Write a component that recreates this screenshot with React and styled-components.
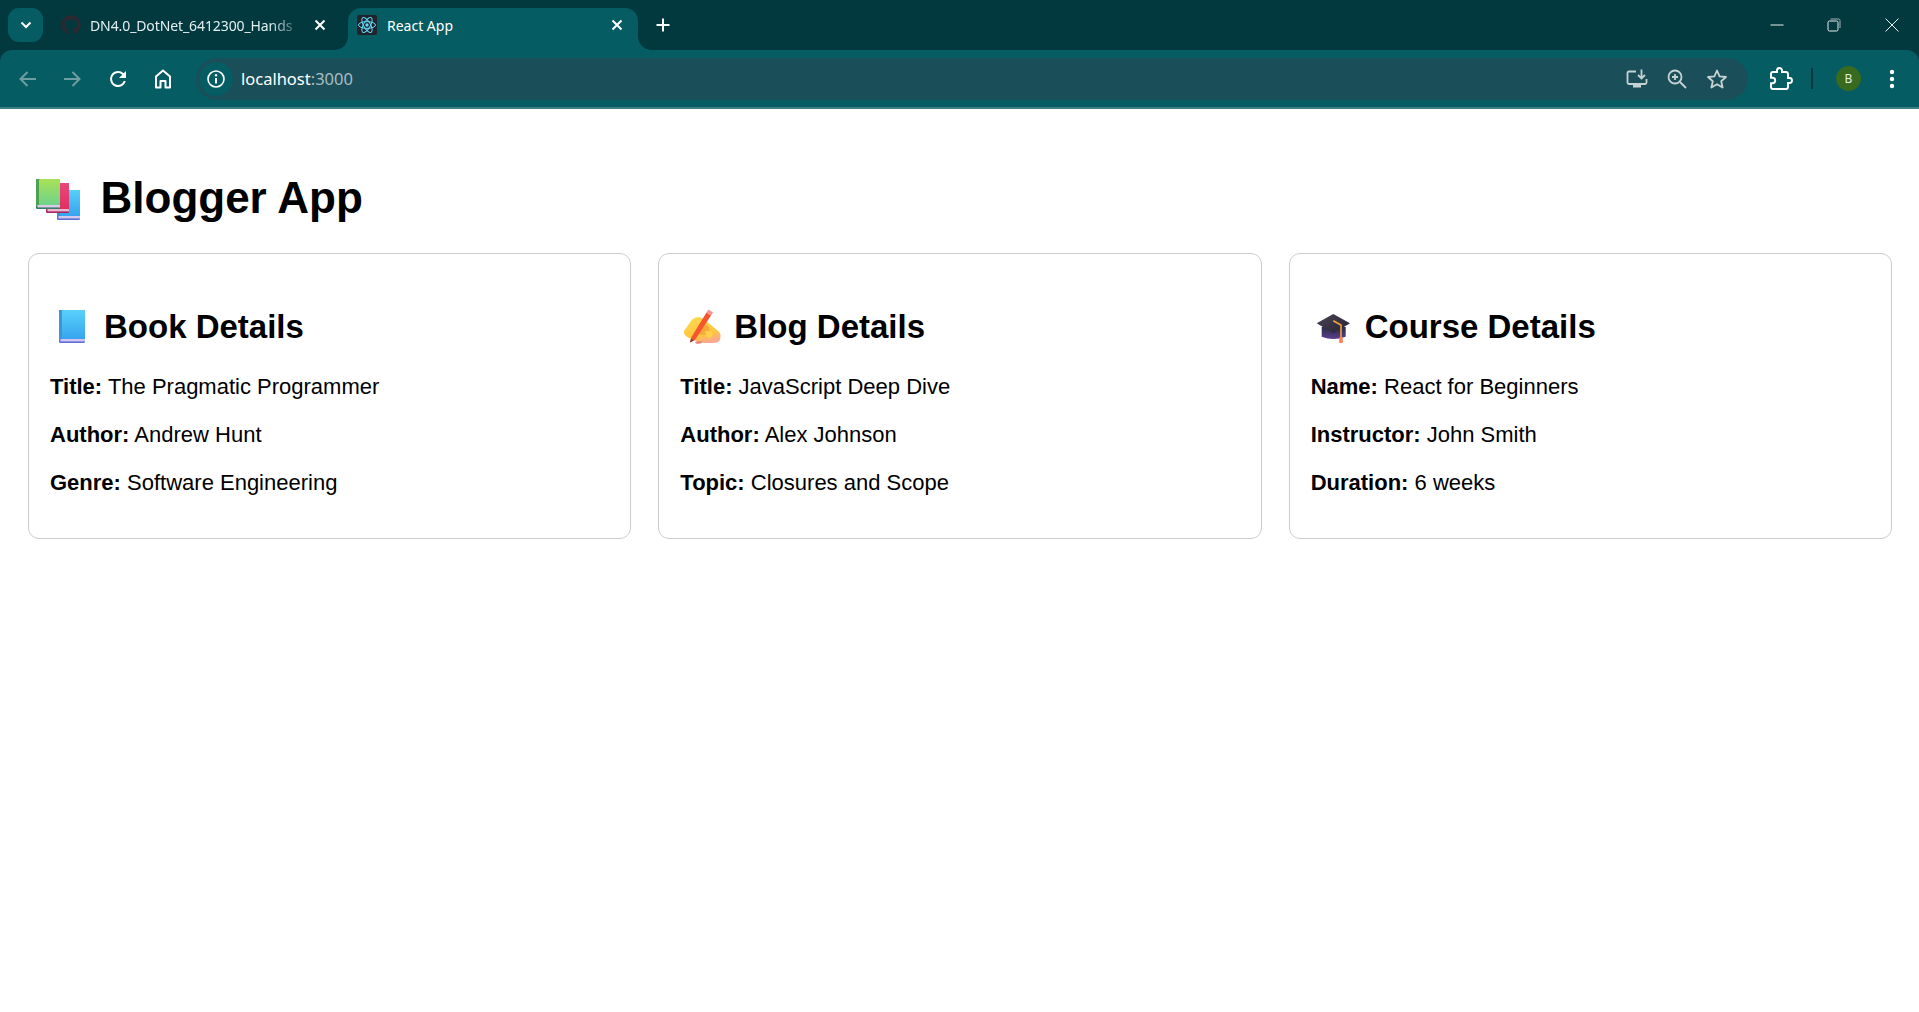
import React from 'react'
import styled, { createGlobalStyle } from 'styled-components'
import { FaGithub } from 'react-icons/fa'

const GlobalStyle = createGlobalStyle`
    html, body {
        margin: 0;
        padding: 0;
        background: #fff;
    }
    body {
        font-family: "Liberation Sans", Arial, sans-serif;
        color: #000;
    }
`;

const Browser = styled.header`
    background: #02393f;
    font-family: "Noto Sans", "Open Sans", sans-serif;
`;

const TabStrip = styled.div`
    height: 50px;
    display: flex;
    align-items: flex-end;
    padding-left: 8px;
    box-sizing: border-box;
`;

const TabMenu = styled.button`
    width: 35px;
    height: 34px;
    margin-bottom: 8px;
    margin-right: 10px;
    border: none;
    padding: 0;
    border-radius: 11px;
    background: #055c63;
    display: flex;
    align-items: center;
    justify-content: center;
`;

const Tab = styled.div`
    position: relative;
    width: ${props => props.$width}px;
    height: 42px;
    box-sizing: border-box;
    display: flex;
    align-items: center;
    gap: ${props => props.$active ? 10 : 9}px;
    padding: ${props => props.$active ? '0 13px 8px 9px' : '0 20px 8px 8px'};
    color: #fff;
    border-radius: 13px 13px 0 0;
    background: ${props => props.$active ? '#055c63' : 'transparent'};

    ${props => props.$active && `
        &::before, &::after {
            content: '';
            position: absolute;
            bottom: 0;
            width: 13px;
            height: 13px;
        }
        &::before {
            left: -13px;
            background: radial-gradient(circle at 0 0, transparent 12.5px, #055c63 13px);
        }
        &::after {
            right: -13px;
            background: radial-gradient(circle at 100% 0, transparent 12.5px, #055c63 13px);
        }
    `}
`;

const TabTitle = styled.span`
    flex: 1;
    min-width: 0;
    font-size: 14px;
    white-space: nowrap;
    color: ${props => props.$active ? '#fff' : '#e3eeef'};
    ${props => props.$fade && `
        letter-spacing: -0.1px;
        mask-image: linear-gradient(to right, #000 84%, rgba(0, 0, 0, 0.25) 97%);
    `}
`;

const NewTab = styled.div`
    width: 20px;
    height: 34px;
    margin: 0 0 8px 15px;
    display: flex;
    align-items: center;
    justify-content: center;
`;

const WindowControls = styled.div`
    margin-left: auto;
    height: 50px;
    display: flex;
    align-items: center;
`;

const WindowButton = styled.div`
    width: 57px;
    height: 50px;
    display: flex;
    align-items: center;
    justify-content: center;
    padding-left: ${props => props.$pad || 0}px;
    box-sizing: border-box;
`;

const Toolbar = styled.div`
    position: relative;
    height: 59px;
    box-sizing: border-box;
    display: flex;
    align-items: center;
    padding: 0 22px 0 0;
    background: #055c63;
    border-radius: 12px 12px 0 0;
    border-bottom: 2px solid #3d7f85;
`;

const NavButton = styled.div`
    width: 45px;
    flex: none;
    height: 40px;
    display: flex;
    align-items: center;
    justify-content: center;
    margin-left: ${props => props.$first ? 5 : 0}px;
`;

const Omnibox = styled.div`
    flex: 1;
    height: 42px;
    margin-left: 11px;
    display: flex;
    align-items: center;
    background: #1a4f5a;
    border-radius: 21px;
    padding: 0 19px 0 3px;
`;

const InfoChip = styled.div`
    width: 34px;
    height: 34px;
    flex: none;
    border-radius: 50%;
    background: #055c63;
    display: flex;
    align-items: center;
    justify-content: center;
`;

const Address = styled.div`
    margin-left: 8px;
    font-size: 16.5px;
    color: #fff;
    span {
        color: #a9bcc0;
    }
`;

const OmniIcons = styled.div`
    margin-left: auto;
    display: flex;
    align-items: center;
    gap: 16px;
`;

const ProfileGroup = styled.div`
    display: flex;
    align-items: center;
    margin-left: 21px;
`;

const Divider = styled.div`
    width: 2px;
    height: 21px;
    margin: 0 23px 0 18px;
    background: #02393f;
`;

const Avatar = styled.div`
    width: 25px;
    height: 25px;
    border-radius: 50%;
    background: #386a20;
    color: #e4efd9;
    font-size: 12px;
    display: flex;
    align-items: center;
    justify-content: center;
`;

const Kebab = styled.div`
    margin-left: 26px;
    display: flex;
    align-items: center;
`;

const Page = styled.main`
    padding: 64px 27px 0 28px;
`;

const Title = styled.h1`
    margin: 0 0 30px;
    height: 50px;
    display: flex;
    align-items: center;
    font-size: 44px;
    font-weight: 700;
    line-height: 50px;
`;

const CardGrid = styled.div`
    display: grid;
    grid-template-columns: repeat(3, 1fr);
    gap: 27px;
`;

const Card = styled.section`
    height: 286px;
    box-sizing: border-box;
    padding: 54px 21px 0;
    border: 1px solid #ccc;
    border-radius: 11px;
`;

const CardTitle = styled.h2`
    margin: 0 0 28px;
    height: 38px;
    display: flex;
    align-items: center;
    font-size: 33px;
    font-weight: 700;
    line-height: 38px;

    svg {
        margin-right: 8px;
        flex: none;
    }
`;

const Field = styled.p`
    margin: 0 0 23px;
    font-size: 22px;
    line-height: 25px;

    strong {
        font-weight: 700;
    }
`;

const Icon = ({ size = 24, children, ...rest }) => (
    <svg width={size} height={size} viewBox="0 0 24 24" fill="none" {...rest}>{children}</svg>
);

const BookShape = ({ id, x, y, w, h, top, bottom, spine, pages, edge }) => (
    <g>
        <defs>
            <linearGradient id={id} x1="0" y1="0" x2="0" y2="1">
                <stop offset="0" stopColor={top} />
                <stop offset="1" stopColor={bottom} />
            </linearGradient>
        </defs>
        <rect x={x} y={y} width={w} height={h} rx="1.2" fill={edge} />
        <rect x={x + 3} y={y} width={w - 3} height={h - 4} rx="1" fill={`url(#${id})`} />
        <rect x={x} y={y} width={3} height={h - 3} fill={spine} />
        <rect x={x + 1.5} y={y + h - 4} width={w - 1.5} height={2.4} fill={pages} />
    </g>
);

const BooksEmoji = () => (
    <svg width="72.500" height="50" viewBox="0 1 72.500 50" style={{ flex: 'none' }}>
        <BookShape id="blueBack" x={29} y={18} w={23} h={30} top="#55d0fb" bottom="#37a4f0" spine="#3d8fd0" pages="#d5c6ee" edge="#5a6fd0" />
        <BookShape id="redBook" x={18} y={11} w={23} h={30} top="#e9487a" bottom="#e22f62" spine="#c82a5a" pages="#e8b7d0" edge="#a8265e" />
        <BookShape id="greenBook" x={8} y={7} w={24} h={30} top="#a9e155" bottom="#6fd38c" spine="#4ea152" pages="#d9cbe6" edge="#3b7a68" />
    </svg>
);

const BlueBookEmoji = () => (
    <svg width="46" height="46" viewBox="0 0 46 46">
        <BookShape id="blueBook" x={9} y={6} w={26} h={33} top="#58d2fb" bottom="#37a4f0" spine="#3f94d4" pages="#d3c5ee" edge="#5a72d8" />
    </svg>
);

const WritingEmoji = () => (
    <svg width="46" height="46" viewBox="0 0 46 46">
        <defs>
            <linearGradient id="handFill" x1="0.2" y1="0" x2="0.6" y2="1">
                <stop offset="0" stopColor="#ffd94f" />
                <stop offset="0.7" stopColor="#ffc63f" />
                <stop offset="1" stopColor="#fca78f" />
            </linearGradient>
        </defs>
        <path d="M4 27 L11 17 Q14 13 19 13 Q23 14 26 17 L37 26 Q41 29 40.500 33 L40 36 Q38 39 33 39 L24 39 Q15 37 9 34 Q3 31 4 27Z" fill="url(#handFill)" />
        <path d="M19 22 Q24 19 28 22 Q31 26 28 30 Q23 32 19 30Z" fill="#f9a93c" />
        <path d="M25 27 Q30 26 33 29 Q33 33 29 34 Q26 33 25 27Z" fill="#ffd04a" />
        <path d="M10 38.500 L11.500 33 L26.500 8.500 L31 11.500 L15 36 Z" fill="#f4562e" />
        <path d="M26.500 8.500 L28.500 5.500 L33 8.500 L31 11.500 Z" fill="#fb8f92" />
        <path d="M10 38.500 L11 34.500 L13.500 36.500 Z" fill="#6d3a3a" />
        <path d="M15 38 Q19 36 23 38 Q20 40.500 16 39.500Z" fill="#f2806e" />
    </svg>
);

const CapEmoji = () => (
    <svg width="46" height="46" viewBox="0 0 46 46">
        <defs>
            <linearGradient id="capBase" x1="0" y1="0" x2="0" y2="1">
                <stop offset="0" stopColor="#2f2a45" />
                <stop offset="1" stopColor="#5a3f90" />
            </linearGradient>
            <linearGradient id="capTop" x1="0" y1="0" x2="1" y2="1">
                <stop offset="0" stopColor="#4a4350" />
                <stop offset="1" stopColor="#262338" />
            </linearGradient>
        </defs>
        <path d="M10.700 23 V32.700 Q22 37.500 34.700 32.700 V23 Z" fill="url(#capBase)" />
        <path d="M5.700 19.300 L22.300 10 L39 19.300 L22.300 29.300 Z" fill="url(#capTop)" />
        <path d="M22.300 16.700 L30 21 V34" stroke="#f2a53a" strokeWidth="1.600" fill="none" />
        <path d="M28.600 33 H31.400 L32 38 Q30 40.500 28 38 Z" fill="#ff7d52" />
    </svg>
);

const ReactFavicon = () => (
    <svg width="20" height="20" viewBox="0 0 20 20" style={{ flex: 'none' }}>
        <rect width="20" height="20" rx="2" fill="#20232a" />
        <g fill="none" stroke="#61dafb" strokeWidth="1">
            <ellipse cx="10" cy="10" rx="8.500" ry="3.400" />
            <ellipse cx="10" cy="10" rx="8.500" ry="3.400" transform="rotate(60 10 10)" />
            <ellipse cx="10" cy="10" rx="8.500" ry="3.400" transform="rotate(120 10 10)" />
        </g>
        <circle cx="10" cy="10" r="1.700" fill="#61dafb" />
    </svg>
);

const CloseIcon = () => (
    <Icon size={16} viewBox="0 0 16 16">
        <path d="M3.500 3.500 L12.500 12.500 M12.500 3.500 L3.500 12.500" stroke="#fff" strokeWidth="2" />
    </Icon>
);

const cards = [
    {
        title: 'Book Details',
        icon: <BlueBookEmoji />,
        fields: [['Title:', 'The Pragmatic Programmer'], ['Author:', 'Andrew Hunt'], ['Genre:', 'Software Engineering']],
    },
    {
        title: 'Blog Details',
        icon: <WritingEmoji />,
        fields: [['Title:', 'JavaScript Deep Dive'], ['Author:', 'Alex Johnson'], ['Topic:', 'Closures and Scope']],
    },
    {
        title: 'Course Details',
        icon: <CapEmoji />,
        fields: [['Name:', 'React for Beginners'], ['Instructor:', 'John Smith'], ['Duration:', '6 weeks']],
    },
];

function App() {
    return (
        <>
            <GlobalStyle />
            <Browser>
                <TabStrip>
                    <TabMenu>
                        <Icon size={16} viewBox="0 0 16 16">
                            <path d="M3.500 5.500 L8 10 L12.500 5.500" stroke="#fff" strokeWidth="2" />
                        </Icon>
                    </TabMenu>
                    <Tab $width={295}>
                        <FaGithub size={20} color="#2b2a30" style={{ flex: 'none' }} />
                        <TabTitle $fade>DN4.0_DotNet_6412300_Hands</TabTitle>
                        <CloseIcon />
                    </Tab>
                    <Tab $width={290} $active>
                        <ReactFavicon />
                        <TabTitle $active>React App</TabTitle>
                        <CloseIcon />
                    </Tab>
                    <NewTab>
                        <Icon size={16} viewBox="0 0 16 16">
                            <path d="M8 1.500 V14.500 M1.500 8 H14.500" stroke="#fff" strokeWidth="2" />
                        </Icon>
                    </NewTab>
                    <WindowControls>
                        <WindowButton>
                            <Icon size={14} viewBox="0 0 14 14">
                                <path d="M0.500 7 H13.500" stroke="#e8f0f0" strokeWidth="1" />
                            </Icon>
                        </WindowButton>
                        <WindowButton>
                            <Icon size={14} viewBox="0 0 14 14">
                                <rect x="1" y="3" width="10" height="10" rx="1.500" stroke="#e8f0f0" />
                                <path d="M3.500 1 H11.500 Q13 1 13 2.500 V10" stroke="#9fb6b8" />
                            </Icon>
                        </WindowButton>
                        <WindowButton $pad={2}>
                            <Icon size={14} viewBox="0 0 14 14">
                                <path d="M0.500 0.500 L13.500 13.500 M13.500 0.500 L0.500 13.500" stroke="#e8f0f0" strokeWidth="1" />
                            </Icon>
                        </WindowButton>
                    </WindowControls>
                </TabStrip>
                <Toolbar>
                    <NavButton $first>
                        <Icon>
                            <path d="M20 12 H5 M11.500 5 L4.500 12 L11.500 19" stroke="#6f9ea2" strokeWidth="2" />
                        </Icon>
                    </NavButton>
                    <NavButton>
                        <Icon>
                            <path d="M3 12 H18 M11.500 5 L18.500 12 L11.500 19" stroke="#6f9ea2" strokeWidth="2" />
                        </Icon>
                    </NavButton>
                    <NavButton>
                        <Icon>
                            <path fill="#fff" d="M17.650 6.350A7.950 7.950 0 0 0 12 4a8 8 0 1 0 7.750 10h-2.080A6 6 0 1 1 12 6c1.660 0 3.140.690 4.220 1.780L13 11h7V4l-2.350 2.350z" />
                        </Icon>
                    </NavButton>
                    <NavButton>
                        <Icon>
                            <path d="M12 3.500 L5 9.500 V20.500 H9.500 V14 H14.500 V20.500 H19 V9.500 Z" stroke="#fff" strokeWidth="2" strokeLinejoin="round" />
                        </Icon>
                    </NavButton>
                    <Omnibox>
                        <InfoChip>
                            <Icon size={20} viewBox="0 0 20 20">
                                <circle cx="10" cy="10" r="8" stroke="#fff" strokeWidth="1.600" />
                                <path d="M10 9 V14.500" stroke="#fff" strokeWidth="2" />
                                <circle cx="10" cy="6.200" r="1.200" fill="#fff" />
                            </Icon>
                        </InfoChip>
                        <Address>localhost<span>:3000</span></Address>
                        <OmniIcons>
                            <Icon>
                                <path d="M11 4.500 H4 Q2.500 4.500 2.500 6 V15.500 Q2.500 17 4 17 H20 Q21.500 17 21.500 15.500 V12" stroke="#c5d2d4" strokeWidth="1.800" />
                                <path d="M16.500 2.500 V11 M13 8 L16.500 11.500 L20 8" stroke="#c5d2d4" strokeWidth="1.800" />
                                <path d="M8 18 H16 V20.500 H8 Z" fill="#c5d2d4" />
                            </Icon>
                            <Icon>
                                <circle cx="10" cy="10" r="6.500" stroke="#c5d2d4" strokeWidth="1.800" />
                                <path d="M15 15 L21 21 M7 10 H13 M10 7 V13" stroke="#c5d2d4" strokeWidth="1.800" />
                            </Icon>
                            <Icon>
                                <path d="M12 3.500 L14.600 9.400 L21 10 L16.200 14.200 L17.600 20.500 L12 17.200 L6.400 20.500 L7.800 14.200 L3 10 L9.400 9.400 Z" stroke="#c5d2d4" strokeWidth="1.800" strokeLinejoin="round" />
                            </Icon>
                        </OmniIcons>
                    </Omnibox>
                    <ProfileGroup>
                        <Icon>
                            <path d="M20.500 11H19V7c0-1.100-.9-2-2-2h-4V3.500a2.500 2.500 0 0 0-5 0V5H4c-1.100 0-2 .9-2 2v3.800h1.500c1.500 0 2.700 1.200 2.700 2.700S5 16.200 3.500 16.200H2V20c0 1.100.9 2 2 2h13c1.100 0 2-.9 2-2v-4h1.500a2.500 2.500 0 0 0 0-5z" stroke="#fff" strokeWidth="1.900" />
                        </Icon>
                        <Divider />
                        <Avatar>B</Avatar>
                        <Kebab>
                            <Icon size={10} viewBox="0 0 10 24" height={24}>
                                <circle cx="5" cy="5" r="2.200" fill="#fff" />
                                <circle cx="5" cy="12" r="2.200" fill="#fff" />
                                <circle cx="5" cy="19" r="2.200" fill="#fff" />
                            </Icon>
                        </Kebab>
                    </ProfileGroup>
                </Toolbar>
            </Browser>
            <Page>
                <Title><BooksEmoji />Blogger App</Title>
                <CardGrid>
                    {cards.map(card => (
                        <Card key={card.title}>
                            <CardTitle>{card.icon}{card.title}</CardTitle>
                            {card.fields.map(([label, value]) => (
                                <Field key={label}><strong>{label}</strong> {value}</Field>
                            ))}
                        </Card>
                    ))}
                </CardGrid>
            </Page>
        </>
    );
}

export default App;
